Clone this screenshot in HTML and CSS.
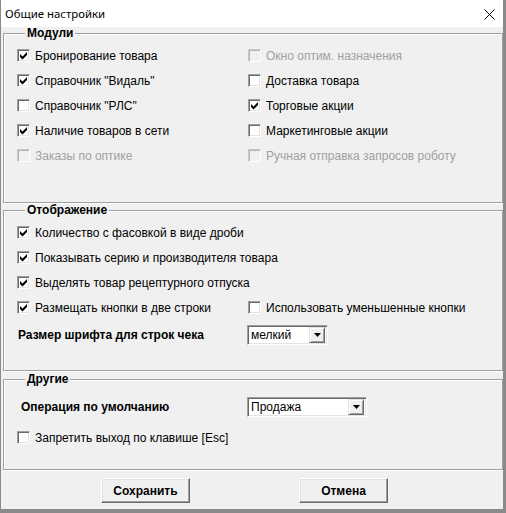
FILE: index.html
```html
<!DOCTYPE html>
<html>
<head>
<meta charset="utf-8">
<title>Общие настройки</title>
<link rel="stylesheet" href="styles.css">
</head>
<body>
<div class="window">
  <div class="titlebar">
    <span class="title">Общие настройки</span>
    <span class="close"><svg width="11" height="11" viewBox="0 0 11 11"><path d="M0.5 0.5L10.5 10.5M10.5 0.5L0.5 10.5" stroke="#000" stroke-width="1"/></svg></span>
  </div>
  <div class="client">
    <fieldset class="group g1">
      <legend>Модули</legend>
      <div class="grid">
        <div class="opt"><span class="box on"><svg viewBox="0 0 11 11"><polygon points="2,4 4.5,6.5 9,2 9,5 4.5,9.5 2,7"/></svg></span><span class="lbl">Бронирование товара</span></div>
        <div class="opt dis"><span class="box"></span><span class="lbl">Окно оптим. назначения</span></div>
        <div class="opt"><span class="box on"><svg viewBox="0 0 11 11"><polygon points="2,4 4.5,6.5 9,2 9,5 4.5,9.5 2,7"/></svg></span><span class="lbl">Справочник "Видаль"</span></div>
        <div class="opt"><span class="box"></span><span class="lbl">Доставка товара</span></div>
        <div class="opt"><span class="box"></span><span class="lbl">Справочник "РЛС"</span></div>
        <div class="opt"><span class="box on"><svg viewBox="0 0 11 11"><polygon points="2,4 4.5,6.5 9,2 9,5 4.5,9.5 2,7"/></svg></span><span class="lbl">Торговые акции</span></div>
        <div class="opt"><span class="box on"><svg viewBox="0 0 11 11"><polygon points="2,4 4.5,6.5 9,2 9,5 4.5,9.5 2,7"/></svg></span><span class="lbl">Наличие товаров в сети</span></div>
        <div class="opt"><span class="box"></span><span class="lbl">Маркетинговые акции</span></div>
        <div class="opt dis"><span class="box"></span><span class="lbl">Заказы по оптике</span></div>
        <div class="opt dis"><span class="box"></span><span class="lbl">Ручная отправка запросов роботу</span></div>
      </div>
    </fieldset>

    <fieldset class="group g2">
      <legend>Отображение</legend>
      <div class="grid">
        <div class="opt wide"><span class="box on"><svg viewBox="0 0 11 11"><polygon points="2,4 4.5,6.5 9,2 9,5 4.5,9.5 2,7"/></svg></span><span class="lbl">Количество с фасовкой в виде дроби</span></div>
        <div class="opt wide"><span class="box on"><svg viewBox="0 0 11 11"><polygon points="2,4 4.5,6.5 9,2 9,5 4.5,9.5 2,7"/></svg></span><span class="lbl">Показывать серию и производителя товара</span></div>
        <div class="opt wide"><span class="box on"><svg viewBox="0 0 11 11"><polygon points="2,4 4.5,6.5 9,2 9,5 4.5,9.5 2,7"/></svg></span><span class="lbl">Выделять товар рецептурного отпуска</span></div>
        <div class="opt"><span class="box on"><svg viewBox="0 0 11 11"><polygon points="2,4 4.5,6.5 9,2 9,5 4.5,9.5 2,7"/></svg></span><span class="lbl">Размещать кнопки в две строки</span></div>
        <div class="opt"><span class="box"></span><span class="lbl">Использовать уменьшенные кнопки</span></div>
      </div>
      <div class="field f-size">
        <span class="flabel">Размер шрифта для строк чека</span>
        <div class="select s-small"><span class="sval">мелкий</span><span class="sbtn"><svg width="7" height="4" viewBox="0 0 7 4"><polygon points="0,0 7,0 3.5,4"/></svg></span></div>
      </div>
    </fieldset>

    <fieldset class="group g3">
      <legend>Другие</legend>
      <div class="field f-op">
        <span class="flabel">Операция по умолчанию</span>
        <div class="select s-op"><span class="sval">Продажа</span><span class="sbtn"><svg width="7" height="4" viewBox="0 0 7 4"><polygon points="0,0 7,0 3.5,4"/></svg></span></div>
      </div>
      <div class="opt esc"><span class="box"></span><span class="lbl">Запретить выход по клавише [Esc]</span></div>
    </fieldset>

    <div class="buttons">
      <button class="btn">Сохранить</button>
      <button class="btn">Отмена</button>
    </div>
  </div>
</div>
</body>
</html>
```

FILE: styles.css
```css
html, body {
  margin: 0;
  padding: 0;
  background: #f0f0f0;
}

.window {
  width: 506px;
  height: 513px;
  box-sizing: border-box;
  border-left: 1px solid #8a8a8a;
  border-right: 3px solid #8a8a8a;
  border-bottom: 4px solid #8a8a8a;
  background: #f0f0f0;
  display: flex;
  flex-direction: column;
  font-family: "Liberation Sans", Arial, sans-serif;
  font-size: 12px;
  color: #000;
  overflow: hidden;
}

.titlebar {
  height: 27px;
  flex: none;
  background: #fff;
  display: flex;
  align-items: center;
  justify-content: space-between;
  padding: 0 8px 0 4px;
}

.title {
  font-family: "Noto Sans", "Open Sans", sans-serif;
  font-size: 11.4px;
  line-height: 14px;
  margin-top: 1px;
}

.close {
  display: flex;
  margin-top: 1px;
}

.client {
  flex: 1;
  display: flex;
  flex-direction: column;
}

.group {
  margin: 0 0 0 2px;
  border: 1px solid #a0a0a0;
  box-shadow: inset 1px 1px 0 #fff, 1px 1px 0 #fff;
  min-width: 0;
}

.group legend {
  margin-left: 8px;
  padding: 0 2px;
  font-weight: bold;
  font-size: 12px;
  line-height: 12px;
  background: #f0f0f0;
}

.g1 {
  padding: 4px 0 34px 13px;
}

.g2 {
  margin-top: 1px;
  padding: 4px 0 20px 13px;
}

.g3 {
  margin-top: 2px;
  padding: 7px 0 19px 13px;
}

.grid {
  display: grid;
  grid-template-columns: 231px 1fr;
  grid-auto-rows: 25px;
}

.opt {
  display: flex;
  align-items: center;
  white-space: nowrap;
}

.opt.wide {
  grid-column: 1 / 3;
}

.box {
  width: 13px;
  height: 13px;
  box-sizing: border-box;
  flex: none;
  border: 1px solid;
  border-color: #a0a0a0 #fff #fff #a0a0a0;
  box-shadow: inset 1px 1px 0 #696969, inset -1px -1px 0 #e3e3e3;
  background: #fff;
  margin-right: 5px;
}

.box svg {
  display: block;
  width: 11px;
  height: 11px;
}

.box polygon {
  fill: #000;
}

.opt.dis .lbl {
  color: #a0a0a0;
}

.opt.dis .box {
  background: #f0f0f0;
  border-color: #c8c8c8 #fff #fff #c8c8c8;
  box-shadow: inset 1px 1px 0 #b4b4b4, inset -1px -1px 0 #f0f0f0;
}

.lbl {
  line-height: 14px;
}

.field {
  display: flex;
  align-items: center;
  height: 30px;
}

.flabel {
  font-weight: bold;
  white-space: nowrap;
}

.f-size .flabel {
  width: 229px;
  padding-left: 1px;
}

.f-op .flabel {
  width: 226px;
  padding-left: 4px;
}

.esc {
  height: 25px;
  margin-top: 3px;
}

.select {
  height: 20px;
  box-sizing: border-box;
  border: 1px solid;
  border-color: #a0a0a0 #fff #fff #a0a0a0;
  box-shadow: inset 1px 1px 0 #696969, inset -1px -1px 0 #e3e3e3;
  background: #fff;
  display: flex;
  align-items: center;
  justify-content: space-between;
  padding: 2px 2px 2px 2px;
}

.s-small {
  width: 81px;
}

.s-op {
  width: 120px;
}

.sval {
  line-height: 14px;
  padding-left: 1px;
}

.sbtn {
  width: 16px;
  height: 16px;
  box-sizing: border-box;
  background: #f0f0f0;
  border: 1px solid;
  border-color: #e3e3e3 #696969 #696969 #e3e3e3;
  box-shadow: inset 1px 1px 0 #fff, inset -1px -1px 0 #a0a0a0;
  display: flex;
  align-items: center;
  justify-content: center;
}

.sbtn svg {
  display: block;
}

.buttons {
  display: flex;
  gap: 109px;
  margin-top: 8px;
  padding-left: 100px;
}

.btn {
  width: 89px;
  height: 25px;
  box-sizing: border-box;
  border: 1px solid;
  border-color: #fff #696969 #696969 #fff;
  box-shadow: inset -1px -1px 0 #a0a0a0, inset 1px 1px 0 #e3e3e3;
  background: #f0f0f0;
  font-family: "Liberation Sans", Arial, sans-serif;
  font-size: 12px;
  font-weight: bold;
  color: #000;
  padding: 0;
  margin: 0;
}
```
